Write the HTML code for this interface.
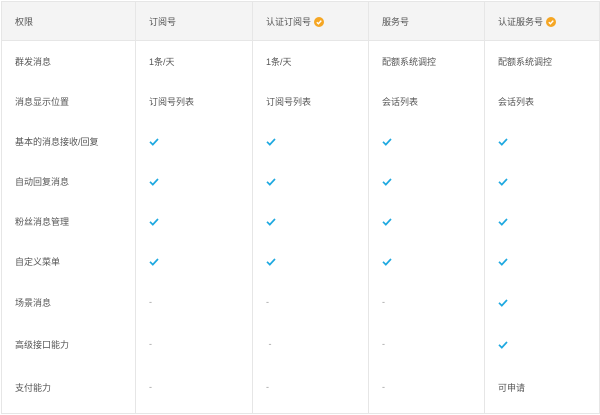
<!DOCTYPE html>
<html><head><meta charset="utf-8"><style>
body{margin:0;background:#fff;font-family:"Liberation Sans","Noto Sans CJK SC",sans-serif;font-size:9px;color:#555;}
table{position:absolute;left:1px;top:1px;border-collapse:collapse;width:598px;table-layout:fixed;}
td{border-left:1px solid #e6e6e6;border-right:1px solid #e6e6e6;height:40px;padding:0 0 0 13px;vertical-align:middle;white-space:nowrap;}
tr.h td{background:#f4f4f4;height:38px;border-bottom:1px solid #e6e6e6;border-top:1px solid #e6e6e6;}
tr.t td{height:42px;}
tr:last-child td{border-bottom:1px solid #e6e6e6;height:44px;padding-bottom:4px;}
.c{display:inline-block;width:10px;height:8px;vertical-align:middle}
.v{display:inline-block;width:10px;height:10px;border-radius:50%;background:#f5a623;vertical-align:-2px;margin-left:3px;position:relative}
.d{color:#999}
</style></head><body>
<table>
<colgroup><col style="width:134px"><col style="width:117px"><col style="width:116px"><col style="width:116px"><col style="width:115px"></colgroup>
<tr class="h"><td>权限</td><td>订阅号</td><td>认证订阅号<span class="v"><svg width="10" height="10" viewBox="0 0 10 10" style="position:absolute;left:0;top:0"><path d="M2.8 5.2L4.4 6.7 7.3 3.6" stroke="#fff" stroke-width="1.4" fill="none"/></svg></span></td><td>服务号</td><td>认证服务号<span class="v"><svg width="10" height="10" viewBox="0 0 10 10" style="position:absolute;left:0;top:0"><path d="M2.8 5.2L4.4 6.7 7.3 3.6" stroke="#fff" stroke-width="1.4" fill="none"/></svg></span></td></tr>
<tr><td>群发消息</td><td>1条/天</td><td>1条/天</td><td>配额系统调控</td><td>配额系统调控</td></tr>
<tr><td>消息显示位置</td><td>订阅号列表</td><td>订阅号列表</td><td>会话列表</td><td>会话列表</td></tr>
<tr><td>基本的消息接收/回复</td><td><svg class="c" viewBox="0 0 10 8"><path d="M1 3.8L3.8 6.6 9 1" stroke="#1da8e0" stroke-width="1.7" fill="none"/></svg></td><td><svg class="c" viewBox="0 0 10 8"><path d="M1 3.8L3.8 6.6 9 1" stroke="#1da8e0" stroke-width="1.7" fill="none"/></svg></td><td><svg class="c" viewBox="0 0 10 8"><path d="M1 3.8L3.8 6.6 9 1" stroke="#1da8e0" stroke-width="1.7" fill="none"/></svg></td><td><svg class="c" viewBox="0 0 10 8"><path d="M1 3.8L3.8 6.6 9 1" stroke="#1da8e0" stroke-width="1.7" fill="none"/></svg></td></tr>
<tr><td>自动回复消息</td><td><svg class="c" viewBox="0 0 10 8"><path d="M1 3.8L3.8 6.6 9 1" stroke="#1da8e0" stroke-width="1.7" fill="none"/></svg></td><td><svg class="c" viewBox="0 0 10 8"><path d="M1 3.8L3.8 6.6 9 1" stroke="#1da8e0" stroke-width="1.7" fill="none"/></svg></td><td><svg class="c" viewBox="0 0 10 8"><path d="M1 3.8L3.8 6.6 9 1" stroke="#1da8e0" stroke-width="1.7" fill="none"/></svg></td><td><svg class="c" viewBox="0 0 10 8"><path d="M1 3.8L3.8 6.6 9 1" stroke="#1da8e0" stroke-width="1.7" fill="none"/></svg></td></tr>
<tr><td>粉丝消息管理</td><td><svg class="c" viewBox="0 0 10 8"><path d="M1 3.8L3.8 6.6 9 1" stroke="#1da8e0" stroke-width="1.7" fill="none"/></svg></td><td><svg class="c" viewBox="0 0 10 8"><path d="M1 3.8L3.8 6.6 9 1" stroke="#1da8e0" stroke-width="1.7" fill="none"/></svg></td><td><svg class="c" viewBox="0 0 10 8"><path d="M1 3.8L3.8 6.6 9 1" stroke="#1da8e0" stroke-width="1.7" fill="none"/></svg></td><td><svg class="c" viewBox="0 0 10 8"><path d="M1 3.8L3.8 6.6 9 1" stroke="#1da8e0" stroke-width="1.7" fill="none"/></svg></td></tr>
<tr><td>自定义菜单</td><td><svg class="c" viewBox="0 0 10 8"><path d="M1 3.8L3.8 6.6 9 1" stroke="#1da8e0" stroke-width="1.7" fill="none"/></svg></td><td><svg class="c" viewBox="0 0 10 8"><path d="M1 3.8L3.8 6.6 9 1" stroke="#1da8e0" stroke-width="1.7" fill="none"/></svg></td><td><svg class="c" viewBox="0 0 10 8"><path d="M1 3.8L3.8 6.6 9 1" stroke="#1da8e0" stroke-width="1.7" fill="none"/></svg></td><td><svg class="c" viewBox="0 0 10 8"><path d="M1 3.8L3.8 6.6 9 1" stroke="#1da8e0" stroke-width="1.7" fill="none"/></svg></td></tr>
<tr class="t"><td>场景消息</td><td class="d">-</td><td class="d">-</td><td class="d">-</td><td><svg class="c" viewBox="0 0 10 8"><path d="M1 3.8L3.8 6.6 9 1" stroke="#1da8e0" stroke-width="1.7" fill="none"/></svg></td></tr>
<tr class="t"><td>高级接口能力</td><td class="d">-</td><td class="d">&nbsp;-</td><td class="d">-</td><td><svg class="c" viewBox="0 0 10 8"><path d="M1 3.8L3.8 6.6 9 1" stroke="#1da8e0" stroke-width="1.7" fill="none"/></svg></td></tr>
<tr><td>支付能力</td><td class="d">-</td><td class="d">-</td><td class="d">-</td><td>可申请</td></tr>
</table>
</body></html>
